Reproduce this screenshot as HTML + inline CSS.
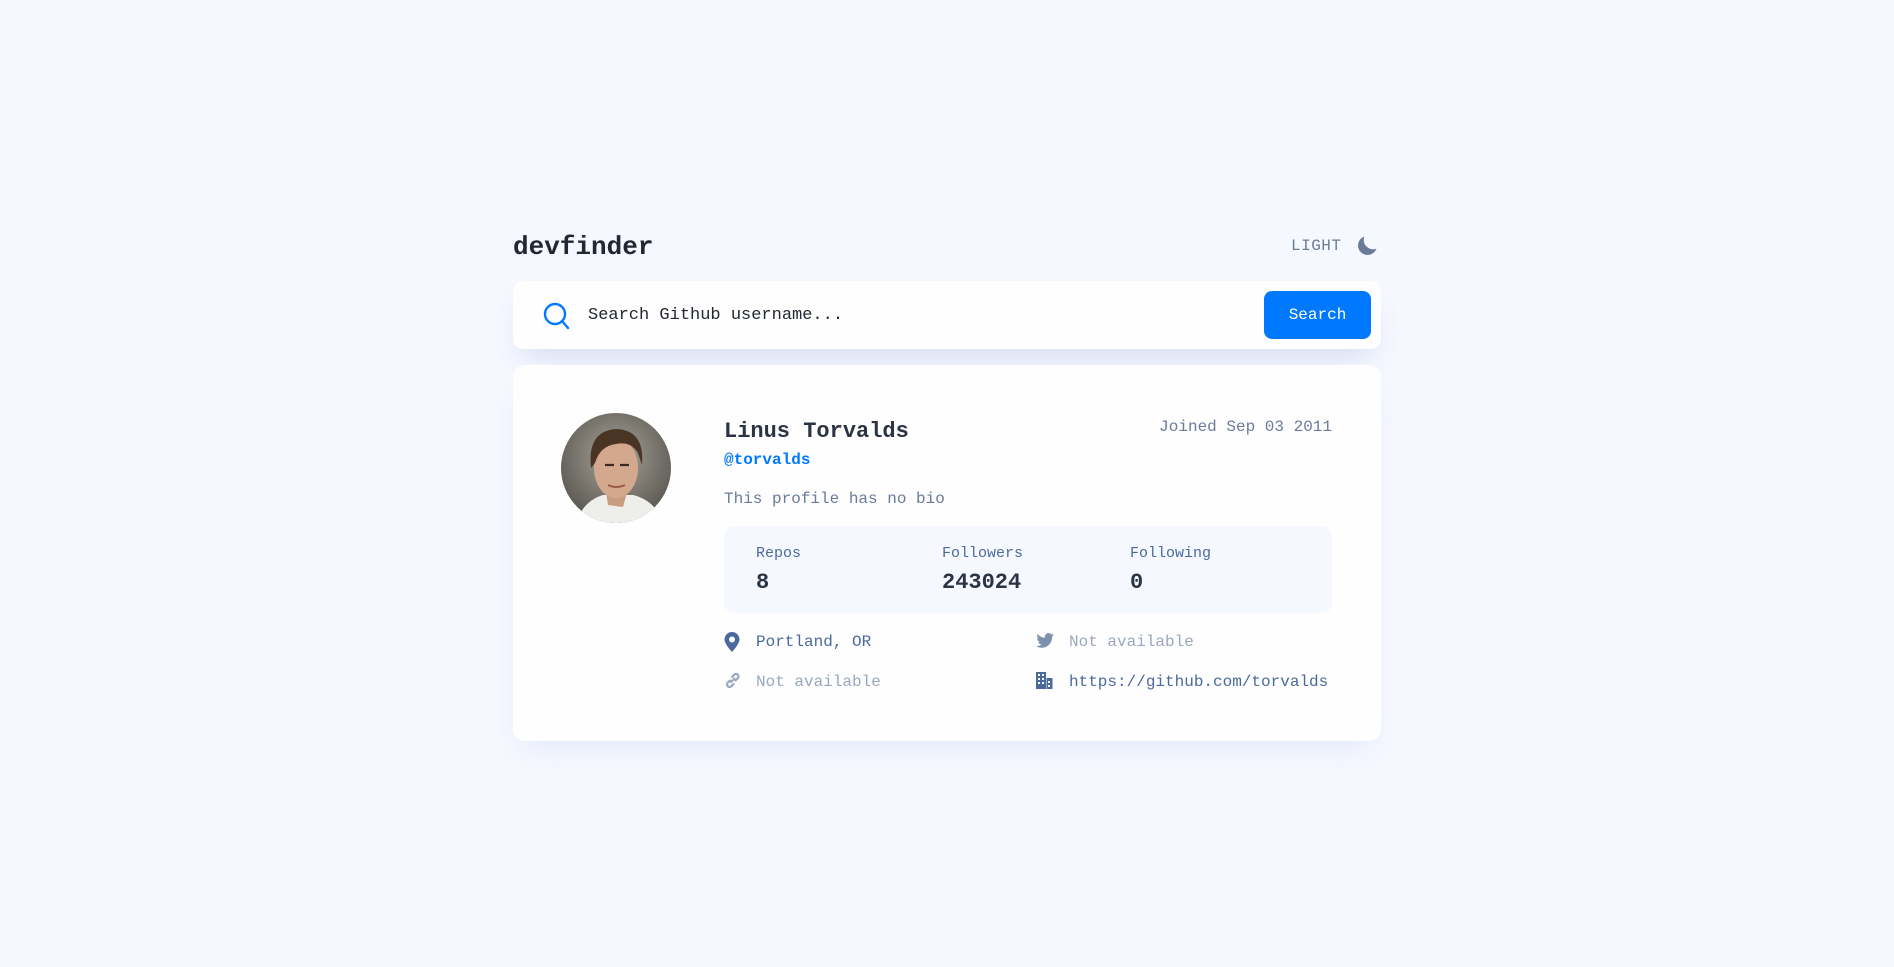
<!DOCTYPE html>
<html><head><meta charset="utf-8"><style>
*{margin:0;padding:0;box-sizing:border-box}
body{width:1894px;height:967px;background:#f6f8ff;font-family:"Liberation Mono",monospace;position:relative;overflow:hidden}
.a{position:absolute;white-space:nowrap}
</style></head><body>
<div class="a" style="left:513px;top:232px;font-size:26px;font-weight:bold;color:#222731">devfinder</div>
<div class="a" style="left:1291px;top:237px;font-size:16px;color:#697c9a;letter-spacing:0.5px">LIGHT</div>
<svg class="a" style="left:1357px;top:236px" width="20" height="20" viewBox="0 0 20 20"><path d="M19.5 12.6A9.3 9.3 0 0 1 7.4.5 9.5 9.5 0 1 0 19.5 12.6z" fill="#697c9a"/></svg>

<div class="a" style="left:513px;top:281px;width:868px;height:68px;background:#fefefe;border-radius:10px;box-shadow:0 16px 30px -10px rgba(70,96,187,0.2)"></div>
<svg class="a" style="left:543px;top:302px" width="28" height="28" viewBox="0 0 28 28"><circle cx="12" cy="12" r="10" fill="none" stroke="#0079ff" stroke-width="2.4"/><path d="M19 19l6 7" stroke="#0079ff" stroke-width="2.4" stroke-linecap="round"/></svg>
<div class="a" style="left:588px;top:306px;font-size:17px;color:#222731">Search Github username...</div>
<div class="a" style="left:1264px;top:291px;width:107px;height:48px;background:#0079ff;border-radius:8px;color:#fff;font-size:16px;text-align:center;line-height:48px">Search</div>

<div class="a" style="left:513px;top:365px;width:868px;height:376px;background:#fefefe;border-radius:12px;box-shadow:0 16px 30px -10px rgba(70,96,187,0.1)"></div>
<svg class="a" style="left:561px;top:413px" width="110" height="110" viewBox="0 0 110 110">
<defs><clipPath id="c"><circle cx="55" cy="55" r="55"/></clipPath><radialGradient id="g" cx="0.5" cy="0.4" r="0.7"><stop offset="0" stop-color="#a9a59c"/><stop offset="1" stop-color="#4e4b45"/></radialGradient></defs>
<g clip-path="url(#c)"><rect width="110" height="110" fill="url(#g)"/>
<path d="M15 110 Q22 88 42 82 L72 82 Q95 88 102 110z" fill="#eeeeea"/>
<path d="M44 72 L47 92 L62 94 L68 72z" fill="#c99c82"/>
<ellipse cx="55" cy="55" rx="22" ry="30" fill="#d4a88d"/>
<path d="M30 55 Q26 18 55 16 Q84 17 81 52 L77 40 Q70 28 55 31 Q39 33 34 50z" fill="#4a3525"/>
<path d="M44 52h9M59 52h9" stroke="#3a2a22" stroke-width="2.2"/>
<path d="M47 72 Q55 76 64 72" stroke="#9a5a4a" stroke-width="2" fill="none"/></g></svg>

<div class="a" style="left:724px;top:419px;font-size:22px;font-weight:bold;color:#2b3442">Linus Torvalds</div>
<div class="a" style="right:562px;top:418px;font-size:16px;color:#697c9a">Joined Sep 03 2011</div>
<div class="a" style="left:724px;top:451px;font-size:16px;font-weight:bold;color:#0079ff">@torvalds</div>
<div class="a" style="left:724px;top:490px;font-size:16px;color:#697c9a">This profile has no bio</div>

<div class="a" style="left:724px;top:526px;width:608px;height:87px;background:#f6f8ff;border-radius:10px"></div>
<div class="a" style="left:756px;top:545px;font-size:15px;color:#4b6a9b">Repos</div>
<div class="a" style="left:942px;top:545px;font-size:15px;color:#4b6a9b">Followers</div>
<div class="a" style="left:1130px;top:545px;font-size:15px;color:#4b6a9b">Following</div>
<div class="a" style="left:756px;top:570px;font-size:22px;font-weight:bold;color:#2b3442">8</div>
<div class="a" style="left:942px;top:570px;font-size:22px;font-weight:bold;color:#2b3442">243024</div>
<div class="a" style="left:1130px;top:570px;font-size:22px;font-weight:bold;color:#2b3442">0</div>

<svg class="a" style="left:724px;top:632px" width="16" height="20" viewBox="0 0 16 20"><path d="M8 0a7.5 7.5 0 0 0-7.5 7.5C.5 12 8 20 8 20s7.5-8 7.5-12.5A7.5 7.5 0 0 0 8 0zm0 10.5a3 3 0 1 1 0-6 3 3 0 0 1 0 6z" fill="#4b6a9b"/></svg>
<div class="a" style="left:756px;top:633px;font-size:16px;color:#4b6a9b">Portland, OR</div>
<svg class="a" style="left:1036px;top:633px" width="18" height="16" viewBox="0 0 18 16"><path d="M18 2a7 7 0 0 1-2 .6A3.6 3.6 0 0 0 17.5.5a7 7 0 0 1-2.3.9A3.6 3.6 0 0 0 9 4.7 10 10 0 0 1 1.6 1a3.6 3.6 0 0 0 1.1 4.8 3.5 3.5 0 0 1-1.6-.4 3.6 3.6 0 0 0 2.9 3.5 3.6 3.6 0 0 1-1.6.1 3.6 3.6 0 0 0 3.3 2.5A7.300 7.3 0 0 1 0 13a10 10 0 0 0 5.6 1.7c6.8 0 10.5-5.6 10.5-10.5v-.5A7.4 7.4 0 0 0 18 2z" fill="#7d90ac"/></svg>
<div class="a" style="left:1069px;top:633px;font-size:16px;color:#9aa8bf">Not available</div>
<svg class="a" style="left:724px;top:672px" width="17" height="17" viewBox="0 0 17 17"><g fill="none" stroke="#9aa8bf" stroke-width="2.2" stroke-linecap="round"><path d="M7 10l3.5-3.5"/><path d="M6 8.5L3.5 11a2.5 2.5 0 0 0 3.5 3.5L9.5 12"/><path d="M8 5l2.5-2.5a2.5 2.5 0 0 1 3.5 3.5L11.5 8.5"/></g></svg>
<div class="a" style="left:756px;top:673px;font-size:16px;color:#9aa8bf">Not available</div>
<svg class="a" style="left:1036px;top:672px" width="17" height="17" viewBox="0 0 17 17"><path d="M0 0h10v17H0zM10.5 6h6v11h-6z" fill="#4b6a9b"/><path d="M2 2h2v2H2zM6 2h2v2H6zM2 6h2v2H2zM6 6h2v2H6zM2 10h2v2H2zM6 10h2v2H6zM12 9h2v2h-2zM12 13h2v2h-2z" fill="#fff"/></svg>
<div class="a" style="left:1069px;top:673px;font-size:16px;color:#4b6a9b">https://github.com/torvalds</div>
</body></html>
